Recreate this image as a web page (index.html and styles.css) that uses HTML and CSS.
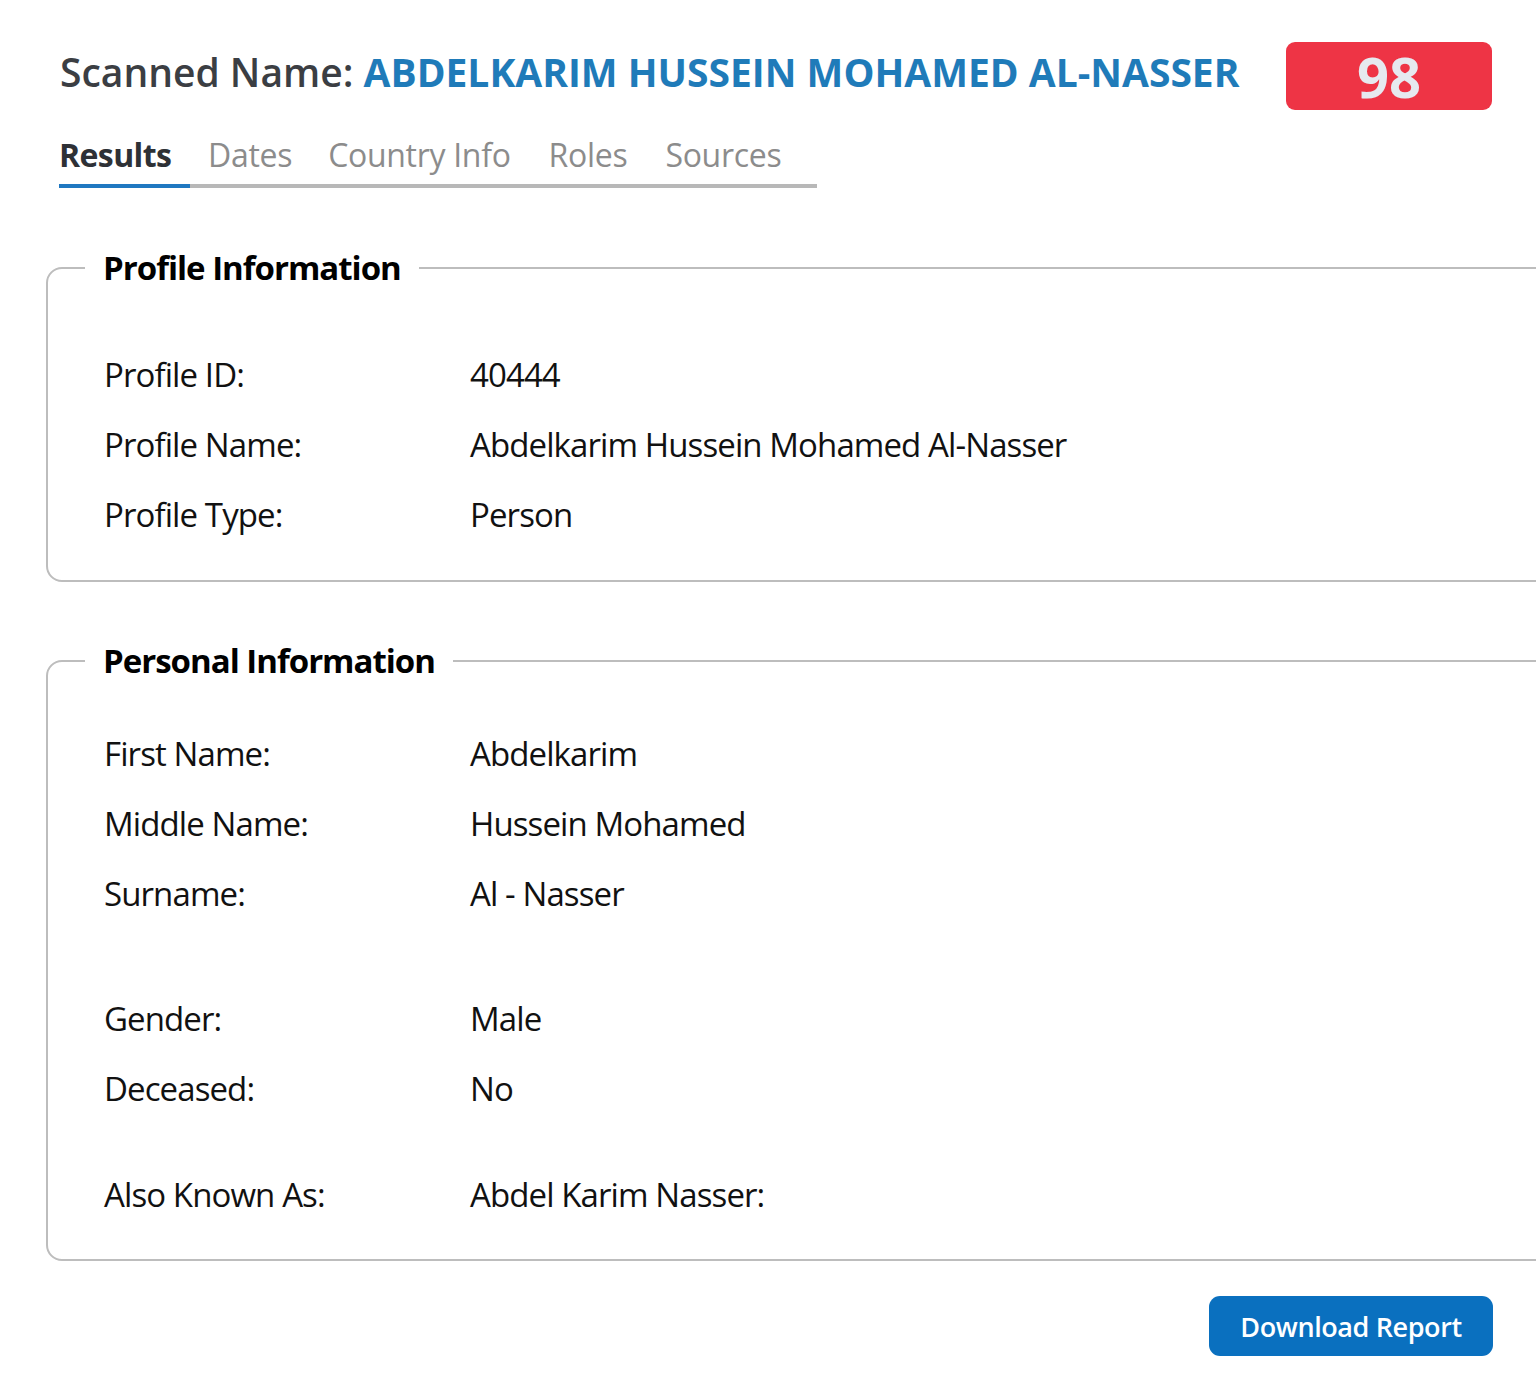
FILE: index.html
```html
<!DOCTYPE html>
<html>
<head>
<meta charset="utf-8">
<link rel="stylesheet" href="styles.css">
</head>
<body>
<div class="page">
  <header class="top">
    <h1 class="title">Scanned Name: <span class="name">ABDELKARIM HUSSEIN MOHAMED AL-NASSER</span></h1>
    <div class="score">98</div>
  </header>
  <nav class="tabs">
    <span class="tab active">Results</span>
    <span class="tab">Dates</span>
    <span class="tab">Country Info</span>
    <span class="tab">Roles</span>
    <span class="tab">Sources</span>
  </nav>

  <fieldset class="box box-profile">
    <legend>Profile Information</legend>
    <div class="rows">
      <div class="row"><span class="label">Profile ID:</span><span class="value">40444</span></div>
      <div class="row"><span class="label">Profile Name:</span><span class="value">Abdelkarim Hussein Mohamed Al-Nasser</span></div>
      <div class="row"><span class="label">Profile Type:</span><span class="value">Person</span></div>
    </div>
  </fieldset>

  <fieldset class="box box-personal">
    <legend>Personal Information</legend>
    <div class="rows">
      <div class="row"><span class="label">First Name:</span><span class="value">Abdelkarim</span></div>
      <div class="row"><span class="label">Middle Name:</span><span class="value">Hussein Mohamed</span></div>
      <div class="row"><span class="label">Surname:</span><span class="value">Al - Nasser</span></div>
      <div class="row gap-lg"><span class="label">Gender:</span><span class="value">Male</span></div>
      <div class="row"><span class="label">Deceased:</span><span class="value">No</span></div>
      <div class="row gap"><span class="label">Also Known As:</span><span class="value">Abdel Karim Nasser:</span></div>
    </div>
  </fieldset>

  <div class="actions">
    <button class="btn">Download Report</button>
  </div>
</div>
</body>
</html>
```

FILE: styles.css
```css
html, body {
  margin: 0;
  padding: 0;
  background: #ffffff;
  overflow-x: hidden;
}
body {
  font-family: "Open Sans", "Noto Sans", sans-serif;
  color: #111;
  width: 1536px;
}
.page {
  padding: 42px 0 0 0;
}
.top {
  display: flex;
  align-items: flex-start;
  padding-left: 60px;
  height: 68px;
}
.title {
  margin: 0;
  font-size: 39px;
  font-weight: 600;
  color: #3b3e43;
  letter-spacing: 0;
  white-space: nowrap;
  width: 1226px;
  line-height: 60px;
}
.title .name {
  color: #1f7bb9;
  font-weight: 700;
}
.score {
  width: 206px;
  height: 68px;
  background: #ee3445;
  border-radius: 9px;
  color: #e6e9ef;
  font-size: 56px;
  font-weight: 700;
  display: flex;
  align-items: center;
  justify-content: center;
  line-height: 1;
}
.tabs {
  display: flex;
  margin: 22px 0 0 59px;
  width: 758px;
  border-bottom: 4px solid #b8b8b8;
}
.tab {
  font-size: 32px;
  color: #8c8c8c;
  padding: 0 19px 6px 19px;
  letter-spacing: -0.3px;
  line-height: 46px;
  margin-bottom: -4px;
  border-bottom: 4px solid transparent;
}
.tab.active {
  color: #2e3136;
  font-weight: 700;
  border-bottom-color: #1f78c1;
  padding-left: 0;
  padding-right: 0;
  width: 131px;
  letter-spacing: -0.6px;
}
.tabs .tab:nth-child(2) {
  padding-left: 18px;
  padding-right: 17px;
}
.box {
  margin: 62px 0 0 46px;
  width: 1540px;
  border: 2px solid #bdbdbd;
  border-radius: 16px;
  padding: 0 0 0 56px;
  box-sizing: border-box;
}
.box legend {
  font-size: 33px;
  font-weight: 700;
  color: #000;
  padding: 0 18px 0 18px;
  margin-left: -19px;
  letter-spacing: -1px;
  line-height: 36px;
}
.rows {
  display: flex;
  flex-direction: column;
}
.row {
  display: flex;
  font-size: 33px;
  letter-spacing: -0.9px;
  line-height: 70px;
  color: #111;
}
.row.gap {
  margin-top: 36px;
}
.row.gap-lg {
  margin-top: 55px;
}
.label {
  width: 366px;
}
.box-profile .rows {
  padding: 54px 0 30px 0;
}
.box-personal {
  margin-top: 61px;
}
.box-personal .rows {
  padding: 40px 0 29px 0;
}
.actions {
  display: flex;
  justify-content: flex-end;
  padding-right: 43px;
  margin-top: 35px;
}
.btn {
  font-family: "Open Sans", "Noto Sans", sans-serif;
  background: #0a70bf;
  color: #fff;
  border: none;
  border-radius: 11px;
  width: 284px;
  height: 60px;
  font-size: 27px;
  font-weight: 600;
  letter-spacing: -0.4px;
}
```
